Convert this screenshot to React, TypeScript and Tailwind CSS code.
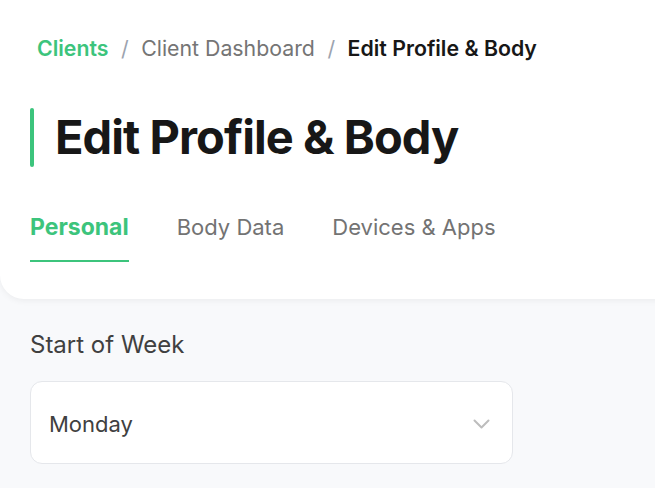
import React from "react";

export default function App() {
  return (
    <div
      className="min-h-[488px] w-[655px] overflow-hidden bg-[#f8f9fb]"
      style={{ fontFamily: "Inter, 'Noto Sans', sans-serif" }}
    >
      <div className="mr-[-40px] rounded-b-[24px] bg-white pl-[30px] pt-[36px] shadow-[0_2px_6px_rgba(0,0,0,0.05)]">
        <nav className="flex items-center gap-[12.5px] text-[21.3px] leading-[24px]">
          <span className="pl-[7px] font-semibold text-[#3cc47c]">Clients</span>
          <span className="text-[#9ca3af]">/</span>
          <span className="text-[#757575]">Client Dashboard</span>
          <span className="text-[#9ca3af]">/</span>
          <span className="font-semibold text-[#171717]">Edit Profile &amp; Body</span>
        </nav>
        <div className="mt-[47px] flex items-center gap-[21px]">
          <div className="h-[59px] w-[4px] rounded-full bg-[#3cc47c]" />
          <h1 className="text-[47px] font-bold leading-[60px] tracking-[-0.02em] text-[#171717]">
            Edit Profile &amp; Body
          </h1>
        </div>
        <div className="mt-[45px] flex items-start gap-[48px] text-[22px] leading-[30px]">
          <div className="flex flex-col">
            <span className="text-[23px] font-bold text-[#3cc47c]">Personal</span>
            <div className="mt-[18px] h-[2px] bg-[#3cc47c]" />
          </div>
          <span className="text-[#737373]">Body Data</span>
          <span className="text-[#737373]">Devices &amp; Apps</span>
        </div>
        <div className="h-[37px]" />
      </div>
      <div className="px-[30px] pt-[31px]">
        <label className="block text-[24px] leading-[30px] text-[#404040]">Start of Week</label>
        <div className="mt-[21px] flex h-[83px] w-[483px] items-center justify-between rounded-[12px] border border-[#e5e7eb] bg-white pl-[18px] pr-[22px] pt-[3px]">
          <span className="text-[22px] text-[#404040]">Monday</span>
          <svg width="17" height="10" viewBox="0 0 17 10" fill="none" stroke="#bdbdbd" strokeWidth="2" strokeLinecap="round" strokeLinejoin="round">
            <path d="M1.5 1.5L8.5 8.5L15.5 1.5" />
          </svg>
        </div>
      </div>
    </div>
  );
}
